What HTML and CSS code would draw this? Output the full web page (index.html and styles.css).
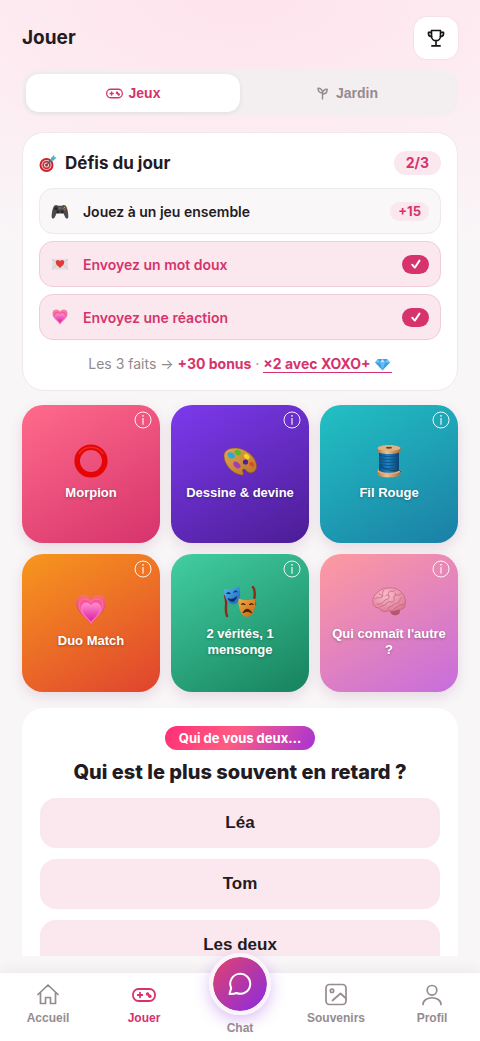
FILE: index.html
```html
<!DOCTYPE html>
<html lang="fr">
<head>
<meta charset="utf-8">
<meta name="viewport" content="width=device-width, initial-scale=1">
<title>Jouer</title>
<link rel="stylesheet" href="styles.css">
</head>
<body>
<svg class="defs" aria-hidden="true">
  <defs>
    <linearGradient id="heartPink" x1="0" y1="0" x2="0" y2="1"><stop offset="0" stop-color="#ff8fd0"/><stop offset="1" stop-color="#d916a0"/></linearGradient>
    <linearGradient id="heartBack" x1="0" y1="0" x2="0" y2="1"><stop offset="0" stop-color="#fb6d8c"/><stop offset="1" stop-color="#c8188a"/></linearGradient>
    <linearGradient id="wood" x1="0" y1="0" x2="1" y2="1"><stop offset="0" stop-color="#e3a653"/><stop offset="1" stop-color="#b87424"/></linearGradient>
    <linearGradient id="threadBlue" x1="0" y1="0" x2="1" y2="0"><stop offset="0" stop-color="#0c4f85"/><stop offset=".45" stop-color="#1f83c4"/><stop offset="1" stop-color="#0a4474"/></linearGradient>
    <linearGradient id="spool" x1="0" y1="0" x2="1" y2="0"><stop offset="0" stop-color="#b97a45"/><stop offset=".4" stop-color="#ecc292"/><stop offset="1" stop-color="#a9683a"/></linearGradient>
    <linearGradient id="maskBlue" x1="0" y1="0" x2="1" y2="1"><stop offset="0" stop-color="#55b9f5"/><stop offset="1" stop-color="#1a62bd"/></linearGradient>
    <linearGradient id="maskGold" x1="0" y1="0" x2="1" y2="1"><stop offset="0" stop-color="#f3ad45"/><stop offset="1" stop-color="#bf641b"/></linearGradient>
    <radialGradient id="brainPink" cx=".4" cy=".3" r=".8"><stop offset="0" stop-color="#fbc0cd"/><stop offset="1" stop-color="#d9748f"/></radialGradient>
    <symbol id="gamepad" viewBox="0 0 24 24">
      <rect x="1" y="6" width="22" height="12" rx="5.500" fill="none" stroke="currentColor" stroke-width="1.800"/>
      <path d="M8 9.700v4.600M5.700 12h4.600" stroke="currentColor" stroke-width="1.800" stroke-linecap="round"/>
      <path d="M15.600 11l2.200 2.200" stroke="currentColor" stroke-width="2" stroke-linecap="round"/>
      <circle cx="15.500" cy="10.900" r="1.700" fill="currentColor"/><circle cx="17.900" cy="13.300" r="1.700" fill="currentColor"/>
    </symbol>
    <symbol id="hearts" viewBox="0 0 32 32">
      <path d="M16 31C14 25 1 19 1 9c0-5 3-8 7.500-8C12 1 14.500 2.500 16 5c1.500-2.500 4-4 7.500-4C28 1 31 4 31 9c0 10-13 16-15 22z" fill="url(#heartBack)" opacity=".8"/>
      <path d="M16 30C14 25 4 20 4 11.500 4 7.500 6.500 5 10 5c2.500 0 5 1.200 6 3.500C17 6.200 19.500 5 22 5c3.500 0 6 2.500 6 6.500C28 20 18 25 16 30z" fill="#f9559a" stroke="#ff8ab5" stroke-width=".6"/>
      <path d="M16 28.500C14.500 25 6.500 20.500 6.500 14.500c0-3.500 2-5.500 4.700-5.500 2 0 4 1.200 4.800 3.200C16.800 10.200 18.800 9 20.800 9c2.700 0 4.700 2 4.700 5.500 0 6-8 10.500-9.500 14z" fill="url(#heartPink)" stroke="#ff9ad2" stroke-width=".6"/>
    </symbol>
    <symbol id="info" viewBox="0 0 18 18">
      <circle cx="9" cy="9" r="8" fill="none" stroke="currentColor"/>
      <circle cx="9" cy="4.800" r=".9" fill="currentColor"/>
      <path d="M9 7v6.800" fill="none" stroke="currentColor" stroke-width="1.200"/>
    </symbol>
    <symbol id="check" viewBox="0 0 12 12"><path d="M2.200 6.700l2.600 2.900 4.700-7" fill="none" stroke="currentColor" stroke-width="1.900" stroke-linecap="round" stroke-linejoin="round"/></symbol>
  </defs>
</svg>

<div class="app">
  <main class="screen">
    <header class="topbar">
      <h1 class="page-title">Jouer</h1>
      <button class="trophy" type="button" aria-label="Trophées">
        <svg viewBox="0 0 24 24" width="18" height="18" fill="none" stroke="currentColor" stroke-width="2.200" stroke-linecap="round" stroke-linejoin="round">
          <path d="M6 2h12v7.500c0 3.500-2.700 6-6 6s-6-2.500-6-6zM6 4.500H2v2c0 2.200 1.500 3.500 4.500 3.500M18 4.500h4v2c0 2.200-1.500 3.500-4.500 3.500M12 17v5M6.500 22.500h11"/>
        </svg>
      </button>
    </header>

    <div class="tabs" role="tablist">
      <button class="tab tab-active" type="button" role="tab" aria-selected="true"><svg width="17" height="17"><use href="#gamepad"/></svg>Jeux</button>
      <button class="tab" type="button" role="tab" aria-selected="false">
        <svg viewBox="0 0 14 14" width="14" height="14" fill="none" stroke="currentColor" stroke-width="1.400" stroke-linejoin="round"><path d="M6.500 13.500V6.500M6.500 7C3.500 7 2 5.300 2 2.200c3 0 4.500 1.500 4.500 4.800zM6.500 8c0-3 1.500-4.800 4.700-4.800C11.200 6.500 9.700 8 6.500 8z"/></svg>Jardin</button>
    </div>

    <section class="daily" aria-labelledby="daily-title">
      <div class="daily-head">
        <svg viewBox="0 0 18 18" width="18" height="18" aria-hidden="true">
          <circle cx="7.500" cy="11" r="7" fill="#c9252f"/><circle cx="7.500" cy="11" r="5" fill="#f6dcdc"/><circle cx="7.500" cy="11" r="4.200" fill="#d22e38"/><circle cx="7.500" cy="11" r="2.500" fill="#f6dcdc"/><circle cx="7.500" cy="11" r="1.500" fill="#c9252f"/>
          <path d="M7.500 11l6-6" stroke="#47626e" stroke-width="1.200"/><path d="M11.500 7l.5-3L15 1l.5 2 2 .6-3 3z" fill="#48b4c8"/>
        </svg>
        <h2 class="daily-title" id="daily-title">Défis du jour</h2>
        <span class="count">2/3</span>
      </div>
      <ul class="tasks">
        <li class="task">
          <svg class="task-icon" viewBox="0 0 18 18" width="18" height="18" aria-hidden="true">
            <path d="M3.500 3.500C5 2.500 6 3 7 3.800h4c1-.8 2-1.300 3.500-.3 1.800 1.500 3 8 2.800 11.500-.1 2-2.200 2-3.100.2L12.500 11.500h-7L3.800 15.200C2.900 17 .8 17 .7 15 .5 11.500 1.700 5 3.500 3.500z" fill="#494b4d"/>
            <circle cx="5" cy="6.500" r="1.600" fill="#232426"/><circle cx="6.900" cy="9.800" r="1.500" fill="#242527"/><circle cx="11.200" cy="9.800" r="1.500" fill="#242527"/><path d="M7.500 5h3v2h-3z" fill="#686a6c"/>
            <circle cx="13.500" cy="5.200" r=".8" fill="#d1a52d"/><circle cx="14.900" cy="6.500" r=".8" fill="#cc4338"/><circle cx="12.300" cy="6.500" r=".8" fill="#9a6a3a"/><circle cx="13.500" cy="7.800" r=".8" fill="#b5702f"/>
          </svg>
          <span class="task-name">Jouez à un jeu ensemble</span><span class="reward">+15</span>
        </li>
        <li class="task task-done">
          <svg class="task-icon" viewBox="0 0 18 18" width="18" height="18" aria-hidden="true">
            <path d="M1 4h16v10.500H1z" fill="#e3dfe0"/><path d="M1 14.500l6-6M17 14.500l-6-6M1 4l8 6 8-6" fill="none" stroke="#c9c3c5" stroke-width=".7"/>
            <path d="M9 13C8 11.500 4.800 10 4.800 7.200c0-2.600 3-3 4.200-1 1.200-2 4.200-1.600 4.200 1C13.200 10 10 11.500 9 13z" fill="#e13b35"/>
          </svg>
          <span class="task-name">Envoyez un mot doux</span><span class="done" role="img" aria-label="Fait"><svg width="12" height="12"><use href="#check"/></svg></span>
        </li>
        <li class="task task-done">
          <svg class="task-icon" width="18" height="16" aria-hidden="true"><use href="#hearts"/></svg>
          <span class="task-name">Envoyez une réaction</span><span class="done" role="img" aria-label="Fait"><svg width="12" height="12"><use href="#check"/></svg></span>
        </li>
      </ul>
      <p class="bonus">Les 3 faits → <strong>+30 bonus</strong> · <a class="bonus-link" href="#xoxo">×2 avec XOXO+ <svg class="gem" viewBox="0 0 18 14" width="18" height="14" aria-hidden="true"><path d="M4 2h9l3 3.500-7.500 8L1 5.500z" fill="#3f9fe8"/><path d="M4 2l2 3.500H1zM13 2l3 3.500h-5z" fill="#6dc5fa"/><path d="M6 5.500L8.500 2 11 5.500z" fill="#b9e9ff"/><path d="M6 5.500h5l-2.500 8z" fill="#62bdf7"/></svg></a></p>
    </section>

    <section class="games" aria-label="Jeux">
      <article class="game-cell">
        <button class="game game-rose" type="button">
          <svg viewBox="0 0 34 34" width="34" height="34" aria-hidden="true"><circle cx="17" cy="17" r="13.800" fill="none" stroke="#e60505" stroke-width="5.600"/><path d="M5 10a14 14 0 0 1 24 0" fill="none" stroke="#f5402d" stroke-width="1.500" opacity=".6"/></svg>
          <span class="game-name">Morpion</span>
        </button>
        <button class="info" type="button" aria-label="Règles de Morpion"><svg width="18" height="18"><use href="#info"/></svg></button>
      </article>
      <article class="game-cell">
        <button class="game game-violet" type="button">
          <svg viewBox="0 0 34 34" width="34" height="34" aria-hidden="true">
            <path d="M1 12C1 6 8 3 16 4.500 26 6.500 34 15 33.500 23c-.3 4-3.500 6.500-7.500 5.500-2.500-.6-3-3-4.500-3.500-2-.6-2.500 1.500-1.500 3.500 1 1.800 0 3-2 2.500C9 29.500 1 20 1 12z" fill="url(#wood)" stroke="#925713" stroke-width=".6"/>
            <circle cx="22.500" cy="18" r="2.600" fill="#4c2196"/>
            <path d="M5 9c2-1.500 4.500-.5 6 1s1 4-1.500 4.500S3 11.500 5 9z" fill="#27a9de"/><path d="M12 6.500c2-2 6 0 6 2.500 0 2-2 3-4 2s-3.500-3-2-4.500z" fill="#55b92b"/><path d="M22 10c2-1 5 2 4.500 4s-3 1.500-4.500 0-1.500-3 0-4z" fill="#f5d42b"/><path d="M28 18c2 0 3.500 2 3 3.800-.5 1.500-3 1-4-.5S26.500 18 28 18z" fill="#e24432"/><path d="M11 18c2-1 3.500 0 5.500 2s1 4.500-1.500 4.500S8.500 20 11 18z" fill="#a13db8"/>
          </svg>
          <span class="game-name">Dessine &amp; devine</span>
        </button>
        <button class="info" type="button" aria-label="Règles de Dessine et devine"><svg width="18" height="18"><use href="#info"/></svg></button>
      </article>
      <article class="game-cell">
        <button class="game game-teal" type="button">
          <svg viewBox="0 0 34 34" width="34" height="34" aria-hidden="true">
            <path d="M5.500 27v3c0 4.500 23 4.500 23 0v-3z" fill="url(#spool)"/><ellipse cx="17" cy="27" rx="11.500" ry="3.200" fill="#deb080"/>
            <path d="M7 6h20v20.500c-3 3-17 3-20 0z" fill="url(#threadBlue)"/>
            <path d="M7 11c5 2 15 2 20 0M7 14c5 2 15 2 20 0M7 17c5 2 15 2 20 0M7 20c5 2 15 2 20 0M7 23c5 2 15 2 20 0" fill="none" stroke="#0b4878" stroke-width=".7"/><path d="M8 21c5 6 13 6 19 5l2 2" fill="none" stroke="#123f66" stroke-width=".8"/>
            <path d="M5.500 4v3c0 4 23 4 23 0V4z" fill="url(#spool)"/><ellipse cx="17" cy="4" rx="11.500" ry="3" fill="#dfb282"/><ellipse cx="17" cy="3.800" rx="3.200" ry="1" fill="#72421f"/>
          </svg>
          <span class="game-name">Fil Rouge</span>
        </button>
        <button class="info" type="button" aria-label="Règles de Fil Rouge"><svg width="18" height="18"><use href="#info"/></svg></button>
      </article>
      <article class="game-cell">
        <button class="game game-orange" type="button">
          <svg width="34" height="32" aria-hidden="true"><use href="#hearts"/></svg>
          <span class="game-name">Duo Match</span>
        </button>
        <button class="info" type="button" aria-label="Règles de Duo Match"><svg width="18" height="18"><use href="#info"/></svg></button>
      </article>
      <article class="game-cell">
        <button class="game game-green" type="button">
          <svg viewBox="0 0 34 34" width="34" height="34" aria-hidden="true">
            <path d="M2 11c3 7-1 13 2 20M30 2c4 5 0 10 2 17" fill="none" stroke="#8d2a1c" stroke-width="2.400" stroke-linecap="round"/>
            <path d="M1 4c6 1 11 0 15-3 2 7 2 15-4 18C6 21 1 14 1 4z" fill="url(#maskBlue)"/>
            <path d="M3.500 9c1-2 3-2 4 0M10.500 7.500c1-2 3-2 4-.5M5 13.500c3 1.500 6 .5 8.500-2-.5 5.500-6 7-8.500 2z" fill="#102e60" stroke="#102e60" stroke-width=".8"/>
            <path d="M15.500 13.500c6 2 11 2 17 0 .5 9-2 18-8 18.500-7 0-9.500-10-9-18.500z" fill="url(#maskGold)"/>
            <path d="M18 19.500c1.500-1.500 3-1.500 4.500.5M26 20c1.500-2 3-2 4.500-.5M20 28c1.500-5 7-5 8.500 0-2.500-2-6-2-8.500 0z" fill="#482006" stroke="#482006" stroke-width=".9"/>
          </svg>
          <span class="game-name">2 vérités, 1 mensonge</span>
        </button>
        <button class="info" type="button" aria-label="Règles de 2 vérités, 1 mensonge"><svg width="18" height="18"><use href="#info"/></svg></button>
      </article>
      <article class="game-cell">
        <button class="game game-lilac" type="button">
          <svg viewBox="0 0 34 34" width="34" height="34" aria-hidden="true">
            <path d="M19 24c3-2 9-2 9 2s-4 5-7 4c-2-.7-4-4-2-6z" fill="#b65571"/>
            <path d="M1 18C0 13 3 9 6 7c3-3 7-4 11-4 5-.5 10 1 13 5 3 3 4 9 3 13-1 3-4 4-7 4-3 1-6 2-9 .500C13 27.500 8 26 7 23c-3 0-5.500-2-6-5z" fill="url(#brainPink)" stroke="#b95672" stroke-width=".6"/>
            <path d="M3 14c3-3 5 0 7-2s-1-5 2-7M5 19c3 1 6-1 7-3s4-1 5-3-2-4 0-6 4 1 6-2M8 22c2-2 5-1 6-3s3-3 5-2 4-2 3-4 2-4 4-3 2-2 3-1M16 24c0-3 4-2 5-4s4-1 6-3 0-4 3-4M22 24c1-2 3-1 4-3s4 0 6-2M7 9c2 0 3 1 3 3M13 11c1-2 3-1 4 0M23 8c1 1 1 2 0 3" fill="none" stroke="#c4617e" stroke-width=".8" stroke-linecap="round"/>
          </svg>
          <span class="game-name">Qui connaît l'autre ?</span>
        </button>
        <button class="info" type="button" aria-label="Règles de Qui connaît l'autre"><svg width="18" height="18"><use href="#info"/></svg></button>
      </article>
    </section>

    <section class="poll" aria-labelledby="poll-title">
      <span class="poll-tag">Qui de vous deux…</span>
      <h2 class="poll-title" id="poll-title">Qui est le plus souvent en retard ?</h2>
      <div class="answers">
        <button class="answer" type="button">Léa</button>
        <button class="answer" type="button">Tom</button>
        <button class="answer" type="button">Les deux</button>
      </div>
    </section>
  </main>

  <nav class="nav" aria-label="Navigation principale">
    <a class="nav-item" href="#accueil">
      <svg viewBox="0 0 24 24" width="24" height="24" fill="none" stroke="currentColor" stroke-width="1.700" stroke-linejoin="round" stroke-linecap="round"><path d="M2 11.500L12 2l10 9.500M4.500 9.500V20.500H9.500V14.500h5v6h5V9.500"/></svg>Accueil</a>
    <a class="nav-item nav-current" href="#jouer" aria-current="page"><svg width="24" height="24"><use href="#gamepad"/></svg>Jouer</a>
    <a class="nav-item nav-chat" href="#chat">
      <span class="chat-disc"><svg viewBox="0 0 24 24" width="24" height="24" fill="none" stroke="currentColor" stroke-width="2" stroke-linejoin="round" stroke-linecap="round"><path d="M1.500 22l1.700-6A10 10 0 1 1 8.500 21Q6 22.200 1.500 22z"/></svg></span>Chat</a>
    <a class="nav-item" href="#souvenirs">
      <svg viewBox="0 0 24 24" width="24" height="24" fill="none" stroke="currentColor" stroke-width="1.700" stroke-linejoin="round" stroke-linecap="round"><rect x="2" y="1.500" width="20" height="20" rx="3.500"/><circle cx="8" cy="7.800" r="1.700"/><path d="M8.500 17.500l8-7L22 15.500"/></svg>Souvenirs</a>
    <a class="nav-item" href="#profil">
      <svg viewBox="0 0 24 24" width="24" height="24" fill="none" stroke="currentColor" stroke-width="1.700" stroke-linecap="round"><circle cx="12" cy="7.300" r="4.800"/><path d="M3 21.500c0-9 18-9 18 0"/></svg>Profil</a>
  </nav>
</div>
</body>
</html>
```

FILE: styles.css
```css
:root {
  --ink: #231b1f;
  --rose: #d6336c;
  --blush: #fae8ee;
  --muted: #968b90;
  --ui: "Liberation Sans", Arial, sans-serif;
}

* { box-sizing: border-box; }

body {
  margin: 0;
  font-family: Inter, sans-serif;
  color: var(--ink);
}

button { border: 0; padding: 0; font-family: var(--ui); cursor: pointer; }
h1, h2, p, ul { margin: 0; padding: 0; }
svg { flex: none; display: block; }
.defs { position: absolute; width: 0; height: 0; }

.app {
  height: 100vh;
  display: flex;
  flex-direction: column;
  background: radial-gradient(120% 260px at 50% 0, #ffe4ed 0, #fdebf1 45%, #f9f6f8 100%) #f9f6f8;
}

.screen {
  flex: 1;
  min-height: 0;
  overflow: hidden;
  margin-bottom: 17px;
  padding: 17px 22px 0;
}

.topbar { display: flex; align-items: center; justify-content: space-between; }
.page-title { font-size: 19px; line-height: 24px; font-weight: 700; }
.trophy {
  width: 44px;
  height: 42px;
  display: grid;
  place-items: center;
  border-radius: 13px;
  background: #fff;
  color: #151314;
  box-shadow: 0 0 2px rgba(60, 20, 40, .12);
}

.tabs {
  display: flex;
  margin-top: 11px;
  padding: 4px;
  border-radius: 16px;
  background: #f3eef0;
}
.tab {
  flex: 1;
  height: 38px;
  display: flex;
  align-items: center;
  justify-content: center;
  gap: 6px;
  border-radius: 13px;
  background: transparent;
  color: var(--muted);
  font-size: 14px;
  font-weight: 700;
}
.tab-active { background: #fff; color: var(--rose); box-shadow: 0 1px 5px rgba(60, 20, 40, .08); }

.daily {
  margin-top: 16px;
  padding: 17px 16px;
  border: 1px solid #f0e9ec;
  border-radius: 22px;
  background: #fff;
}
.daily-head { display: flex; align-items: center; gap: 8px; }
.daily-title { flex: 1; font-size: 17px; line-height: 26px; font-weight: 700; }
.count {
  padding: 0 12px;
  border-radius: 12px;
  background: var(--blush);
  color: var(--rose);
  font-size: 14px;
  line-height: 24px;
  font-weight: 700;
}
.tasks { display: flex; flex-direction: column; gap: 7px; margin-top: 12px; list-style: none; }
.task {
  height: 46px;
  display: flex;
  align-items: center;
  padding: 0 11px;
  border: 1px solid #eee9eb;
  border-radius: 14px;
  background: #f9f7f8;
  font-size: 14px;
  font-weight: 600;
}
.task-done { border-color: #f0cbd8; background: var(--blush); color: var(--rose); }
.task-name { flex: 1; margin-left: 14px; }
.reward {
  padding: 0 8px;
  border-radius: 10px;
  background: var(--blush);
  color: var(--rose);
  font-size: 13px;
  line-height: 19px;
  font-weight: 700;
}
.done {
  width: 27px;
  height: 19px;
  display: grid;
  place-items: center;
  border-radius: 10px;
  background: var(--rose);
  color: #fff;
}
.bonus { margin-top: 15px; text-align: center; color: #918a8d; font-size: 14px; line-height: 18px; }
.bonus strong, .bonus-link { color: var(--rose); font-weight: 700; }
.bonus-link { border-bottom: 1px solid; text-decoration: none; }
.gem { display: inline-block; vertical-align: -2px; }

.games { display: grid; grid-template-columns: repeat(3, 1fr); gap: 11px; margin-top: 14px; }
.game-cell { position: relative; aspect-ratio: 1; }
.game {
  width: 100%;
  height: 100%;
  display: flex;
  flex-direction: column;
  align-items: center;
  justify-content: center;
  gap: 7px;
  padding: 0 8px 3px;
  border-radius: 21px;
  color: #fff;
  box-shadow: 0 5px 14px rgba(90, 20, 60, .12);
}
.game-name { font-size: 13px; line-height: 16px; font-weight: 700; text-shadow: 0 1px 3px rgba(0, 0, 0, .3); }
.game-rose { background: linear-gradient(150deg, #ff6b8b, #d6336c); }
.game-violet { background: linear-gradient(150deg, #7c3aed, #4c1d95); }
.game-teal { background: linear-gradient(150deg, #22c1c3, #1b7fa6); }
.game-orange { background: linear-gradient(150deg, #f7971e, #e0432f); }
.game-green { background: linear-gradient(150deg, #43cea2, #16825d); }
.game-lilac { background: linear-gradient(150deg, #ff9a9e, #c66ddd); }
.info {
  position: absolute;
  top: 6px;
  right: 8px;
  background: transparent;
  color: rgba(255, 255, 255, .9);
}

.poll {
  display: flex;
  flex-direction: column;
  align-items: center;
  margin-top: 16px;
  padding: 18px;
  border-radius: 22px;
  background: #fff;
}
.poll-tag {
  padding: 0 14px;
  border-radius: 12px;
  background: linear-gradient(120deg, #ff2e76, #ff5c82 45%, #a733d4);
  color: #fff;
  font-size: 13px;
  line-height: 24px;
  font-weight: 700;
}
.poll-title { margin-top: 10px; font-size: 20px; line-height: 24px; font-weight: 800; text-align: center; }
.answers { align-self: stretch; display: flex; flex-direction: column; gap: 11px; margin-top: 14px; }
.answer {
  height: 50px;
  border-radius: 16px;
  background: var(--blush);
  color: var(--ink);
  font-size: 17px;
  font-weight: 700;
}

.nav {
  display: grid;
  grid-template-columns: repeat(5, 1fr);
  height: 68px;
  background: #fff;
  box-shadow: 0 -2px 12px rgba(60, 20, 40, .07);
}
.nav-item {
  display: flex;
  flex-direction: column;
  align-items: center;
  gap: 4px;
  padding-top: 10px;
  color: var(--muted);
  font-family: var(--ui);
  font-size: 12px;
  line-height: 14px;
  font-weight: 700;
  text-decoration: none;
}
.nav-current { color: var(--rose); }
.nav-chat { margin-top: -20px; padding-top: 0; gap: 6px; }
.chat-disc {
  width: 62px;
  height: 62px;
  display: grid;
  place-items: center;
  border: 4px solid #fbf5f9;
  border-radius: 50%;
  background: linear-gradient(135deg, #e0436b, #8a2be2) padding-box;
  color: #fff;
  box-shadow: 0 5px 16px rgba(138, 43, 226, .3);
}
```
